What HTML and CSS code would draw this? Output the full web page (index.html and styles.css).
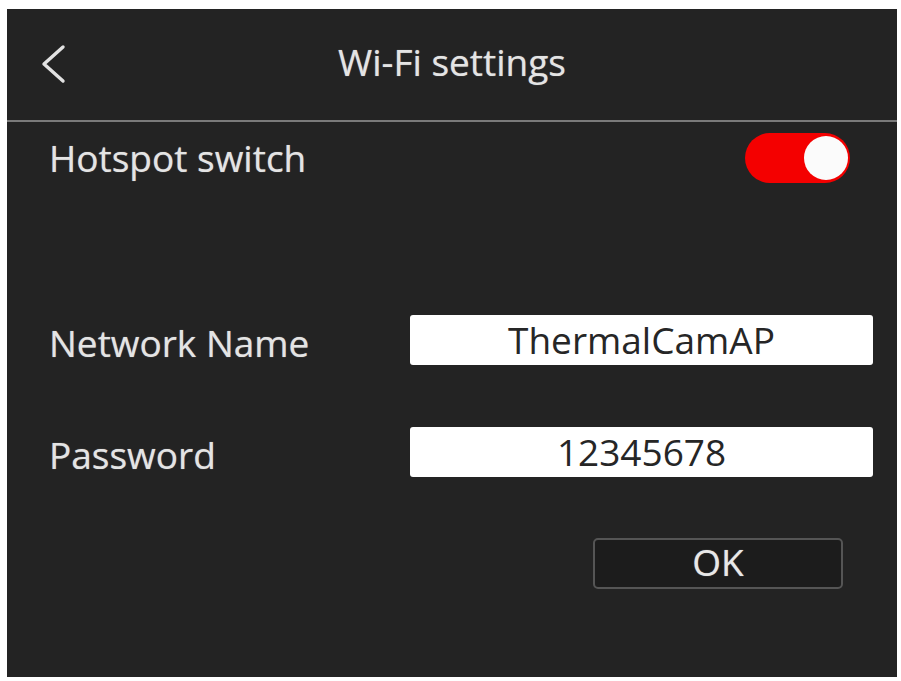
FILE: index.html
```html
<!DOCTYPE html>
<html lang="en">
<head>
<meta charset="utf-8">
<title>Wi-Fi settings</title>
<link rel="stylesheet" href="styles.css">
</head>
<body>
<div class="screen">
  <header class="header">
    <button class="back" aria-label="Back">
      <svg width="28" height="40" viewBox="0 0 28 40"><path d="M24 3 L5 20 L24 37" fill="none" stroke="#e2e2e2" stroke-width="3.4" stroke-linecap="round" stroke-linejoin="round"/></svg>
    </button>
    <h1 class="title">Wi-Fi settings</h1>
    <span class="spacer"></span>
  </header>
  <main class="content">
    <div class="row-switch">
      <span class="label">Hotspot switch</span>
      <span class="toggle on"><span class="knob"></span></span>
    </div>
    <div class="fields">
      <span class="label field-label">Network Name</span>
      <div class="input">ThermalCamAP</div>
      <span class="label field-label">Password</span>
      <div class="input">12345678</div>
    </div>
    <div class="actions">
      <button class="ok">OK</button>
    </div>
  </main>
</div>
</body>
</html>
```

FILE: styles.css
```css
html, body {
  margin: 0;
  padding: 0;
  background: #ffffff;
}
body {
  width: 901px;
  height: 681px;
  padding: 9px 4px 4px 7px;
  box-sizing: border-box;
  font-family: "Open Sans", "DejaVu Sans", sans-serif;
}
.screen {
  width: 890px;
  height: 668px;
  background: #232323;
  display: flex;
  flex-direction: column;
  color: #e4e4e4;
}
.header {
  height: 111px;
  border-bottom: 2px solid #7a7a7a;
  display: flex;
  align-items: center;
  padding: 0 0 0 32px;
  box-sizing: content-box;
}
.back {
  background: none;
  border: 0;
  padding: 0;
  width: 28px;
  height: 40px;
  display: flex;
  margin-top: -2px;
}
.title {
  flex: 1;
  margin: 0 60px 0 0;
  text-align: center;
  font-weight: 400;
  font-size: 37px;
  line-height: 50px;
  color: #e4e4e4;
  padding-bottom: 6px;
  text-shadow: 0 0 1px rgba(228, 228, 228, 0.6);
}
.spacer { width: 0; }
.content {
  display: flex;
  flex-direction: column;
  padding: 11px 24px 0 42px;
}
.row-switch {
  display: flex;
  align-items: center;
  justify-content: space-between;
  height: 50px;
  padding-right: 23px;
}
.label {
  font-size: 37px;
  font-weight: 400;
  line-height: 50px;
  color: #e4e4e4;
  white-space: nowrap;
  text-shadow: 0 0 1px rgba(228, 228, 228, 0.6);
}
.toggle {
  position: relative;
  width: 105px;
  height: 50px;
  border-radius: 25px;
  background: #f40000;
}
.knob {
  position: absolute;
  right: 2px;
  top: 3px;
  width: 44px;
  height: 44px;
  border-radius: 50%;
  background: #fbfbfb;
}
.fields {
  display: grid;
  grid-template-columns: 1fr 463px;
  row-gap: 62px;
  margin-top: 132px;
}
.field-label {
  padding-top: 6px;
  line-height: 44px;
}
.input {
  height: 50px;
  background: #ffffff;
  border-radius: 3px;
  color: #262626;
  font-size: 37px;
  font-weight: 400;
  line-height: 50px;
  text-align: center;
}
.actions {
  display: flex;
  justify-content: flex-end;
  margin-top: 61px;
  padding-right: 30px;
}
.ok {
  width: 250px;
  height: 51px;
  box-sizing: border-box;
  border: 2px solid #555555;
  border-radius: 5px;
  background: #1c1c1c;
  color: #e8e8e8;
  font-family: "Open Sans", "DejaVu Sans", sans-serif;
  font-size: 37px;
  font-weight: 400;
  line-height: 44px;
  padding: 0 0 4px 0;
  text-shadow: 0 0 1px rgba(232, 232, 232, 0.6);
}
```
